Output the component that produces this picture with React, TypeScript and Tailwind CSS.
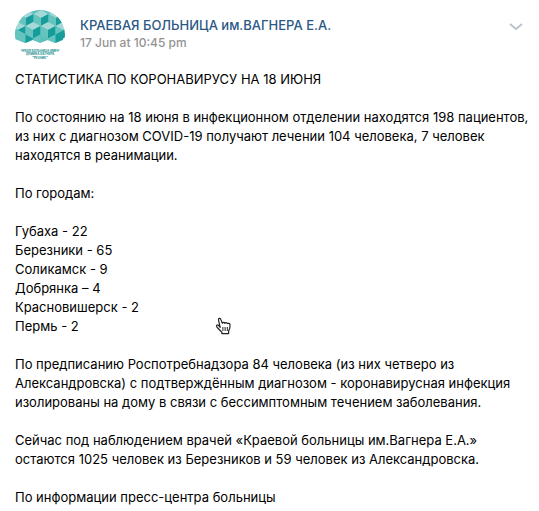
const cities = [
  'Губаха - 22',
  'Березники - 65',
  'Соликамск - 9',
  'Добрянка – 4',
  'Красновишерск - 2',
  'Пермь - 2',
];

const cubes = [
  [11, 4],
  [26, 4],
  [41, 4],
  [3, 16],
  [18, 16],
  [33, 16],
  [48, 16],
];

function Cube({ x, y }: { x: number; y: number }) {
  return (
    <g transform={`translate(${x} ${y})`}>
      <path d="M0 -4 L7.5 0 L0 4 L-7.5 0Z" fill="#a5d9d8" />
      <path d="M-7.5 0 L0 4 V12.5 L-7.5 8.5Z" fill="#66c4bf" />
      <path d="M7.5 0 L0 4 V12.5 L7.5 8.5Z" fill="#169c9b" />
    </g>
  );
}

function HospitalLogo() {
  return (
    <svg viewBox="0 0 50 50" className="size-[50px] shrink-0 rounded-full" role="img" aria-label="Краевая больница">
      <path d="M3 16 L11 0 H41 L48 16 V30 L40 33 L33 30 L25 33 L18 30 L10 33 L0 29 V16Z" fill="#5cc0bb" />
      {cubes.map(([x, y]) => (
        <Cube key={`${x}-${y}`} x={x} y={y} />
      ))}
      <path d="M3 20 L10.5 24 V33 L3 29.5Z M18 28.5 L25.5 24.5 V32.5 L18 30Z M33 28.5 L40.5 24.5 V33 L33 30Z" fill="#66c4bf" />
      <path d="M10.5 24.5 L18 28.5 V29.5 L10.5 33Z M40.5 24.5 L48 20.5 V29.5 L40.5 33Z" fill="#169c9b" />
      <g fill="#23918f" fontFamily="Inter, sans-serif" fontWeight="700" fontSize="3" textAnchor="middle">
        <text x="25" y="41.8">ЧЕВАЯ БОЛЬНИЦА ИМЕН</text>
        <text x="25" y="45.4">ДЕМИКА ВАГНЕРА</text>
        <text x="25" y="49">"РЕЗНИК"</text>
      </g>
    </svg>
  );
}

function HandPointer() {
  return (
    <svg viewBox="0 0 17 18" className="pointer-events-none absolute top-[317px] left-[215px] h-[18px] w-[17px]" aria-hidden="true">
      <path
        d="M5.2 10.4 L3.5 3.2 C3.1 1.2 5.2 .7 5.8 2.4 L7.3 6.2 C7.7 5.2 9.4 5.1 9.8 6.3 C10.5 5.4 12 5.5 12.4 6.6 C13.3 6 14.8 6.4 15 7.6 C15.3 10.4 14.8 12.3 13.6 14.1 V16.6 H6.9 V15.2 C5.2 13.7 3.5 11.7 1.8 9.9 C.8 8.4 2.3 7.4 3.5 8.4Z"
        fill="#fff"
        stroke="#222"
        strokeWidth="1.2"
        strokeLinejoin="round"
      />
      <path d="M7.9 10 V14 M10.1 10 V14 M12.3 10 V14" stroke="#222" />
    </svg>
  );
}

export default function App() {
  return (
    <article className="relative bg-white pt-[10px] pl-[15px] font-['Inter','Liberation_Sans',sans-serif] text-[13px] leading-[19px] text-black">
      <header className="flex items-start pr-[15px]">
        <HospitalLogo />
        <div className="ml-[15px] min-w-0 flex-1 pt-[6px]">
          <h1 className="font-medium text-[#2a5885]">
            <a href="#hospital">КРАЕВАЯ БОЛЬНИЦА им.ВАГНЕРА Е.А.</a>
          </h1>
          <time className="block text-[12px] leading-4 font-medium text-[#939393]">17 Jun at 10:45 pm</time>
        </div>
        <button type="button" aria-label="Действия" className="mt-3 cursor-pointer">
          <svg viewBox="0 0 16 10" className="h-[10px] w-4" fill="none" stroke="#bcc3cd" strokeWidth="2">
            <path d="M2 2 L8 7 L14 2" />
          </svg>
        </button>
      </header>
      <div className="mt-[10px] flex flex-col gap-[19px]">
        <p>СТАТИСТИКА ПО КОРОНАВИРУСУ НА 18 ИЮНЯ</p>
        <p>
          По состоянию на 18 июня в инфекционном отделении находятся 198 пациентов,
          <br />
          из них с диагнозом COVID-19 получают лечении 104 человека, 7 человек
          <br />
          находятся в реанимации.
        </p>
        <p>По городам:</p>
        <ul>
          {cities.map((city) => (
            <li key={city}>{city}</li>
          ))}
        </ul>
        <p>
          По предписанию Роспотребнадзора 84 человека (из них четверо из
          <br />
          Александровска) с подтверждённым диагнозом - коронавирусная инфекция
          <br />
          изолированы на дому в связи с бессимптомным течением заболевания.
        </p>
        <p>
          Сейчас под наблюдением врачей «Краевой больницы им.Вагнера Е.А.»
          <br />
          остаются 1025 человек из Березников и 59 человек из Александровска.
        </p>
        <p>По информации пресс-центра больницы</p>
      </div>
      <HandPointer />
    </article>
  );
}
